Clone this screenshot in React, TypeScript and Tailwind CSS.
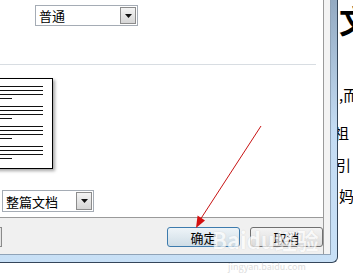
const cjk = { fontFamily: '"Noto Sans CJK SC", "Liberation Sans", sans-serif' }

function DropButton() {
  return (
    <div className="w-[16px] h-full border border-[#8c8c8c] bg-gradient-to-b from-[#f4f4f4] to-[#d6d6d6] flex items-center justify-center">
      <svg width="7" height="4" viewBox="0 0 7 4">
        <path d="M0 0 L7 0 L3.5 4 Z" fill="#111" />
      </svg>
    </div>
  )
}

function Combo({ text, className }: { text: string; className: string }) {
  return (
    <div className={`flex items-center justify-between border border-[#a5acb5] bg-white pl-[3px] pr-[1px] py-[1px] ${className}`}>
      <span className="text-[13px] leading-none text-black">{text}</span>
      <DropButton />
    </div>
  )
}

function PagePreview() {
  const groups = [0, 1, 2, 3]
  return (
    <div className="ml-[-10px] mt-[13px] w-[63px] h-[91px] bg-white border border-black shadow-[2px_2px_3px_rgba(0,0,0,0.35)] pt-[7px] pl-[8px]">
      {groups.map((g) => (
        <div key={g} className="flex flex-col gap-[3px] mb-[7px]">
          <div className="h-px w-[44px] bg-[#111]" />
          <div className="h-px w-[44px] bg-[#111]" />
          <div className="h-px w-[44px] bg-[#111]" />
          <div className="h-px w-[13px] bg-[#111]" />
        </div>
      ))}
    </div>
  )
}

export default function App() {
  return (
    <div className="relative w-[353px] h-[278px] bg-white overflow-hidden flex" style={cjk}>
      {/* dialog */}
      <div className="w-[338px] h-[263px] shrink-0 bg-gradient-to-b from-[#93aac2] via-[#c4dcf3] to-[#c8e0f6] border-r border-b border-[#34465a] rounded-br-[6px]">
        <div className="w-[331px] h-[255px] bg-[#f3f3f3] border-r border-b border-[#8fa3b8] flex flex-col">
          <div className="w-[324px] h-[218px] bg-white border-r border-[#9a9a9a] flex flex-col">
            <Combo text="普通" className="ml-[35px] mt-[5px] w-[103px] h-[21px]" />
            <div className="mt-[38px] h-px w-[316px] bg-[#d8dde2]" />
            <PagePreview />
            <Combo text="整篇文档" className="ml-[2px] mt-[21px] w-[92px] h-[22px]" />
          </div>
          <div className="w-[324px] h-[37px] border-t border-r border-[#9a9a9a] bg-[#f0f0f0] flex items-start pt-[9px]">
            <div className="w-[2px] h-[20px] border-r border-y border-[#8a8a8a] bg-[#e4e4e4]" />
            <button className="ml-[165px] w-[73px] h-[20px] rounded-[3px] border border-[#3d7bad] bg-gradient-to-b from-[#eef4f8] to-[#cfdde6] text-[13px] leading-none text-black flex items-center justify-center">
              确定
            </button>
            <button className="ml-[10px] w-[73px] h-[20px] rounded-[3px] border border-[#707070] bg-gradient-to-b from-[#f4f4f4] to-[#dcdcdc] text-[13px] leading-none text-black flex items-center justify-center">
              取消
            </button>
          </div>
        </div>
      </div>

      {/* page behind the dialog */}
      <div className="w-[15px] shrink-0 overflow-hidden pl-[1px] text-black">
        <div className="text-[32px] font-bold leading-none mt-[3px] whitespace-nowrap">文</div>
        <div className="text-[15px] leading-none mt-[52px] whitespace-nowrap">,而</div>
        <div className="text-[15px] leading-none mt-[23px] ml-[-5px] whitespace-nowrap">祖</div>
        <div className="text-[15px] leading-none mt-[17px] ml-[-3px] whitespace-nowrap">引</div>
        <div className="text-[15px] leading-none mt-[16px] whitespace-nowrap">妈</div>
      </div>

      {/* watermark */}
      <div className="absolute left-[212px] top-[228px] text-[22px] font-bold text-white leading-none opacity-70 [text-shadow:0_0_1px_#bbb]">
        Baidu经验
      </div>
      <div className="absolute left-[228px] top-[262px] text-[9px] text-[#ddd] leading-none">jingyan.baidu.com</div>

      {/* red annotation arrow */}
      <svg className="absolute left-0 top-0" width="353" height="278" viewBox="0 0 353 278">
        <line x1="261" y1="126" x2="200" y2="220" stroke="#c81414" strokeWidth="1" />
        <path d="M196 228 L197.6 215.6 L205 220.4 Z" fill="#d41010" />
      </svg>
    </div>
  )
}
